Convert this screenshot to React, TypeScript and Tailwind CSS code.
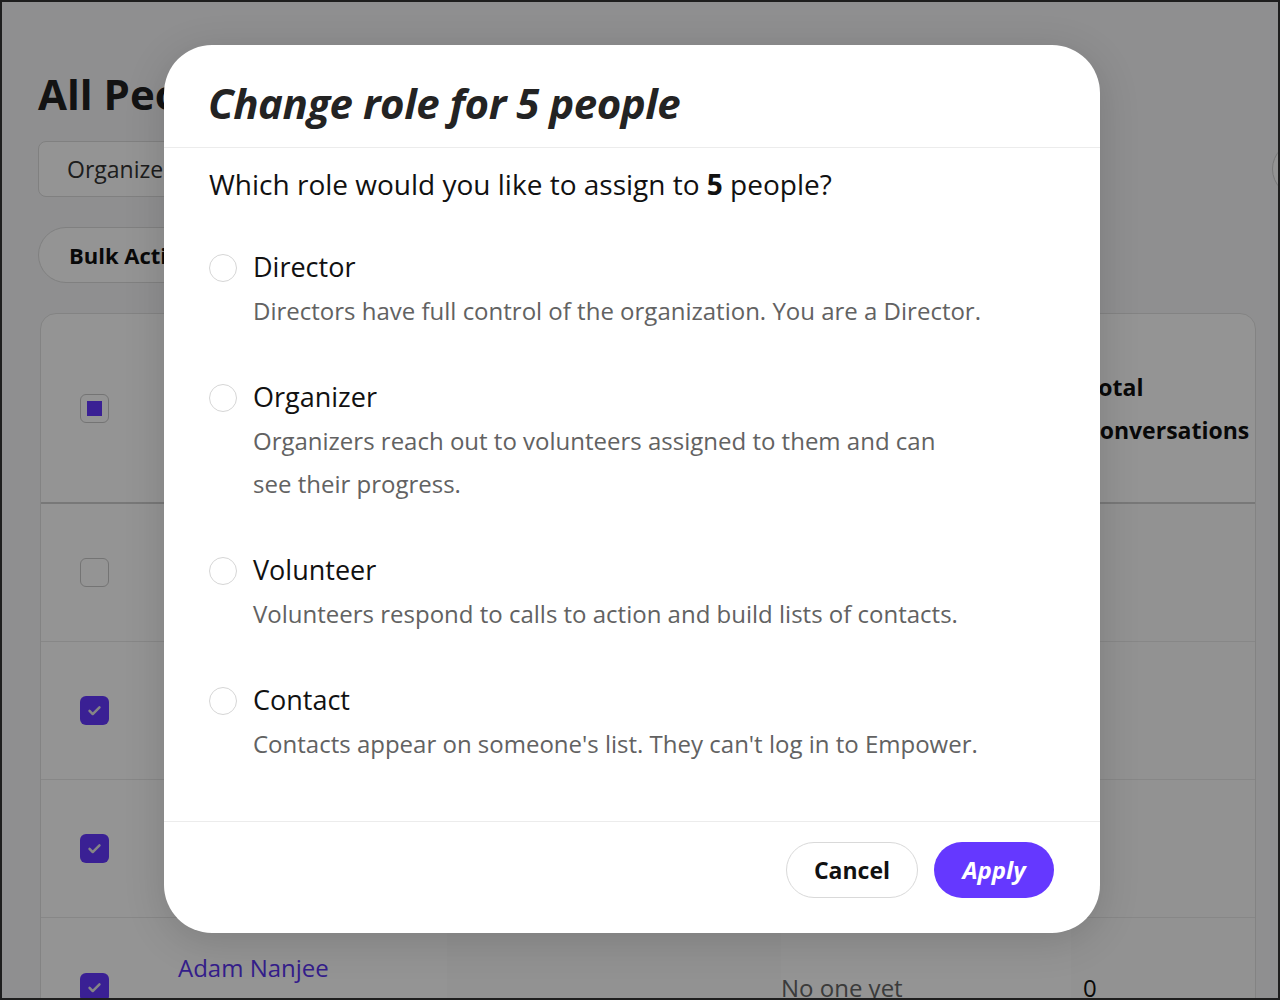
import React from "react";

type Role = { name: string; desc: React.ReactNode };

const roles: Role[] = [
  {
    name: "Director",
    desc: "Directors have full control of the organization. You are a Director.",
  },
  {
    name: "Organizer",
    desc: (
      <>
        Organizers reach out to volunteers assigned to them and can
        <br />
        see their progress.
      </>
    ),
  },
  {
    name: "Volunteer",
    desc: "Volunteers respond to calls to action and build lists of contacts.",
  },
  {
    name: "Contact",
    desc: "Contacts appear on someone's list. They can't log in to Empower.",
  },
];

function Checkbox({ state }: { state: "none" | "some" | "all" }) {
  if (state === "all") {
    return (
      <div className="flex h-[29px] w-[29px] items-center justify-center rounded-md bg-[#6538ff]">
        <svg width="17" height="17" viewBox="0 0 24 24" fill="none" stroke="#e6e6e6" strokeWidth="3.5" strokeLinecap="round" strokeLinejoin="round">
          <path d="M5 12.5l4.5 4.5L19 7.5" />
        </svg>
      </div>
    );
  }
  return (
    <div className="flex h-[29px] w-[29px] items-center justify-center rounded-md border border-[#c8c8c8] bg-white">
      {state === "some" && <div className="h-[15px] w-[15px] bg-[#6538ff]" />}
    </div>
  );
}

function Row({ state }: { state: "none" | "all" }) {
  return (
    <div className="grid h-[138px] grid-cols-[106px_1fr] border-b border-[#e8e8e8]">
      <div className="flex items-center justify-center">
        <Checkbox state={state} />
      </div>
      <div className="grid grid-cols-[300px_334px_290px_1fr]">
        <div />
        <div className="bg-[#fcfcfc]" />
        <div />
        <div className="bg-[#fcfcfc]" />
      </div>
    </div>
  );
}

export default function App() {
  return (
    <div className="relative h-[1000px] w-[1280px] overflow-hidden border-2 border-[#1e1e1e] bg-[#f6f7f9] font-['Open_Sans',sans-serif]">
      <div className="px-[36px] pt-[66px]">
        <h1 className="text-[42px] font-bold leading-[52px] text-[#222]">All People</h1>
        <div className="mt-[21px] flex items-center justify-between">
          <div className="flex h-[56px] w-[320px] items-center rounded-lg border border-[#dcdcdc] bg-white px-[28px] text-[23px] text-[#333]">
            Organizers
          </div>
          <div className="mr-[-86px] h-[56px] w-[56px] rounded-full border border-[#cfcfcf] bg-white" />
        </div>
        <div className="mt-[30px] flex h-[56px] w-[260px] items-center rounded-full border border-[#dcdcdc] bg-white px-[30px] text-[22px] font-bold text-[#111]">
          Bulk Actions
        </div>
        <div className="mt-[30px] ml-[2px] mr-[-14px] overflow-hidden rounded-t-2xl border border-[#e2e2e2] bg-white">
          <div className="grid h-[190px] grid-cols-[106px_1fr] border-b-2 border-[#cfcfcf]">
            <div className="flex items-center justify-center">
              <Checkbox state="some" />
            </div>
            <div className="grid grid-cols-[924px_1fr] items-center">
              <div />
              <div className="pl-[14px] pt-[2px] text-[23px] font-bold leading-[43px] text-[#111]">
                Total
                <br />
                Conversations
              </div>
            </div>
          </div>
          <Row state="none" />
          <Row state="all" />
          <Row state="all" />
          <div className="grid h-[138px] grid-cols-[106px_1fr]">
            <div className="flex items-start justify-center pt-[55px]">
              <Checkbox state="all" />
            </div>
            <div className="grid grid-cols-[300px_334px_290px_1fr] items-start">
              <div className="pl-[31px] pt-[32px] text-[24px] text-[#5a35f0]">Adam Nanjee</div>
              <div className="h-full bg-[#fcfcfc]" />
              <div className="pt-[52px] text-[24px] text-[#666]">No one yet</div>
              <div className="h-full bg-[#fcfcfc] pl-[12px] pt-[52px] text-[24px] text-[#111]">0</div>
            </div>
          </div>
        </div>
      </div>

      <div className="absolute inset-0 bg-black/[0.42]" />

      <div className="absolute left-[162px] top-[43px] flex h-[888px] w-[936px] flex-col rounded-[48px] bg-white shadow-[0_8px_40px_rgba(0,0,0,0.15)]">
        <div className="flex h-[103px] items-center border-b border-[#ececec] px-[44px] pt-[14px]">
          <h2 className="text-[42px] font-bold italic leading-none tracking-[-0.5px] text-[#232323]">
            Change role for 5 people
          </h2>
        </div>
        <div className="flex flex-1 flex-col gap-[47px] px-[45px] pt-[18px]">
          <p className="text-[28px] leading-[36px] text-[#111]">
            Which role would you like to assign to <span className="font-bold">5</span> people?
          </p>
          {roles.map((r) => (
            <div key={r.name} className="flex gap-[16px]">
              <div className="mt-[5px] h-[28px] w-[28px] shrink-0 rounded-full border border-[#d6d6d6] bg-white" />
              <div>
                <div className="text-[27px] leading-[36px] text-[#111]">{r.name}</div>
                <div className="mt-[4px] text-[24px] leading-[43px] text-[#626262]">{r.desc}</div>
              </div>
            </div>
          ))}
        </div>
        <div className="flex h-[112px] items-start justify-end gap-[16px] border-t border-[#ececec] pr-[46px] pt-[20px]">
          <button className="h-[56px] w-[132px] rounded-full border border-[#d9d9d9] bg-white text-[23px] font-bold text-[#111]">
            Cancel
          </button>
          <button className="h-[56px] w-[120px] rounded-full bg-[#6538ff] text-[24px] font-bold italic text-white">
            Apply
          </button>
        </div>
      </div>
    </div>
  );
}
